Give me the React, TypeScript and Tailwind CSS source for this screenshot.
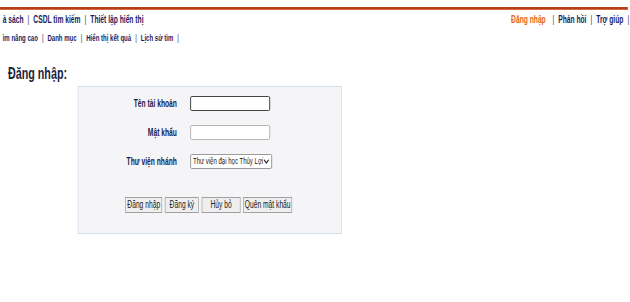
import React from "react";

const navLeft = ["à sách", "CSDL tìm kiếm", "Thiết lập hiển thị"];
const navSub = ["ìm nâng cao", "Danh mục", "Hiển thị kết quả", "Lịch sử tìm"];
const buttons = [
  { label: "Đăng nhập", w: "w-[55px]" },
  { label: "Đăng ký", w: "w-[51px]" },
  { label: "Hủy bỏ", w: "w-[58px]" },
  { label: "Quên mật khẩu", w: "w-[73px]" },
];

function Sep() {
  return <span className="px-[6px] font-normal text-[#1b1b5e]">|</span>;
}

export default function App() {
  return (
    <div className="h-[302px] w-[630px] overflow-hidden bg-white">
      {/* the captured page is squeezed horizontally, so the layout is drawn wide and scaled */}
      <div className="w-[940px] origin-top-left scale-x-[0.67] font-['Liberation_Sans',Arial,sans-serif] text-[#1b1b5e]">
        <div className="pt-[7px]">
          <div className="h-[3px] w-[937px] border-b border-[#d9683c] bg-[#b13f1b]" />
        </div>

        {/* top menu */}
        <div className="flex h-[15px] items-end justify-between pl-[4px] text-[10px] font-bold leading-none">
          <div className="flex items-center">
            {navLeft.map((t, i) => (
              <React.Fragment key={t}>
                {i > 0 && <Sep />}
                <span>{t}</span>
              </React.Fragment>
            ))}
          </div>
          <div className="flex items-center pr-[1px]">
            <span className="text-[#e8651c]">Đăng nhập</span>
            <span className="pl-[10px] pr-[6px] font-normal">|</span>
            <span>Phản hồi</span>
            <Sep />
            <span>Trợ giúp</span>
            <span className="pl-[6px] font-normal">|</span>
          </div>
        </div>

        <div className="mt-[6px] flex h-[14px] items-center pl-[4px] text-[9px] font-bold leading-none">
          {navSub.map((t) => (
            <React.Fragment key={t}>
              <span>{t}</span>
              <Sep />
            </React.Fragment>
          ))}
        </div>

        <h1 className="mt-[20px] pl-[12px] text-[16px] font-bold leading-[18px] text-[#22223a]">Đăng nhập:</h1>

        <div className="ml-[116px] mt-[3px] flex h-[148px] w-[394px] flex-col border border-[#cde0ee] bg-[#f5f5f8] pt-[9px]">
          <div className="grid grid-cols-[147px_1fr] items-center gap-x-[20px] gap-y-[14px] text-[10px] font-bold text-[#1b1b4a]">
            <label className="text-right">Tên tài khoản</label>
            <input className="h-[15px] w-[119px] rounded-[2px] border border-[#222] bg-white" />
            <label className="text-right">Mật khẩu</label>
            <input type="password" className="h-[15px] w-[119px] rounded-[2px] border border-[#aaa] bg-white" />
            <label className="text-right">Thư viện nhánh</label>
            <div className="flex h-[15px] w-[122px] items-center justify-between rounded-[2px] border border-[#888] bg-white pl-[3px] pr-[3px] text-[9px] font-normal text-[#222]">
              <span className="whitespace-nowrap">Thư viện đại học Thủy Lợi</span>
              <svg width="9" height="5" viewBox="0 0 9 5">
                <path d="M1 0.8 L4.5 4 L8 0.8" fill="none" stroke="#222" strokeWidth="1.4" />
              </svg>
            </div>
          </div>

          <div className="mt-[28px] flex gap-[4px] pl-[70px] text-[10px] text-[#222]">
            {buttons.map((b) => (
              <button
                key={b.label}
                className={`h-[16px] whitespace-nowrap border border-[#a0a0a0] bg-[#efefef] leading-none ${b.w}`}
              >
                {b.label}
              </button>
            ))}
          </div>
        </div>
      </div>
    </div>
  );
}
